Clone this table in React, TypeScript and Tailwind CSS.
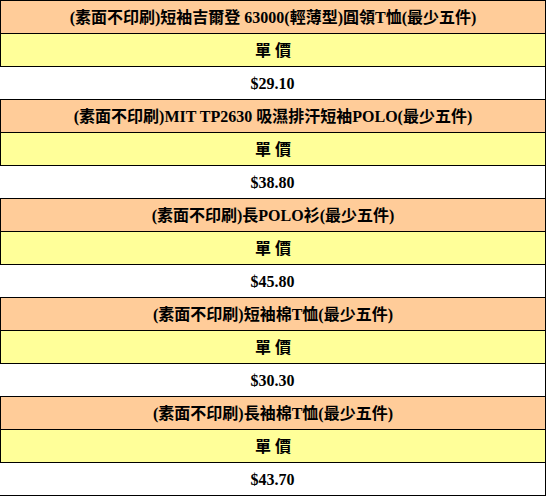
import React from "react";

const items = [
  { name: "(素面不印刷)短袖吉爾登 63000(輕薄型)圓領T恤(最少五件)", price: "$29.10" },
  { name: "(素面不印刷)MIT TP2630 吸濕排汗短袖POLO(最少五件)", price: "$38.80" },
  { name: "(素面不印刷)長POLO衫(最少五件)", price: "$45.80" },
  { name: "(素面不印刷)短袖棉T恤(最少五件)", price: "$30.30" },
  { name: "(素面不印刷)長袖棉T恤(最少五件)", price: "$43.70" },
];

export default function App() {
  return (
    <div
      className="w-[546px] h-[496px] bg-white border-t border-black text-black font-bold text-[16px] leading-none"
      style={{ fontFamily: '"Liberation Serif", "Noto Sans CJK TC", serif' }}
    >
      {items.map((it) => (
        <div key={it.name} className="flex flex-col">
          <div className="h-[33px] bg-[#ffcc99] border-x border-b border-black flex items-center justify-center pt-[2px]">
            {it.name}
          </div>
          <div className="h-[33px] bg-[#ffff99] border-x border-b border-black flex items-center justify-center pt-[2px]">
            單 價
          </div>
          <div className="h-[33px] bg-white border-r border-b border-black flex items-center justify-center pt-[2px]">
            {it.price}
          </div>
        </div>
      ))}
    </div>
  );
}
